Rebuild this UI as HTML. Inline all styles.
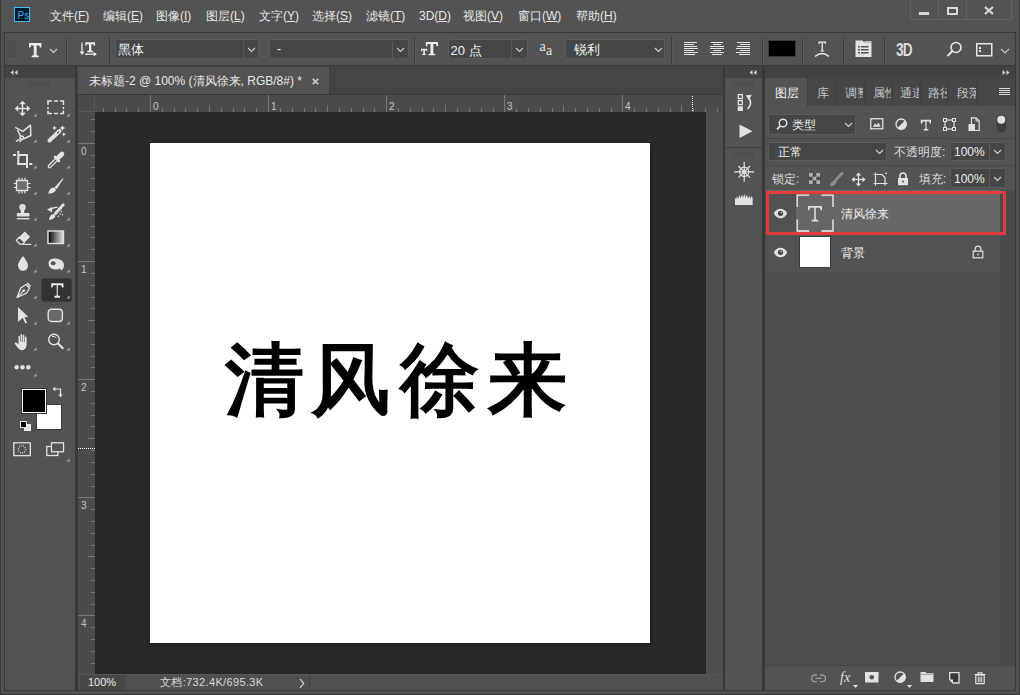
<!DOCTYPE html>
<html><head><meta charset="utf-8">
<style>
*{margin:0;padding:0;box-sizing:border-box}
html,body{width:1020px;height:695px;overflow:hidden;background:#4b4b4b;font-family:"Liberation Sans",sans-serif;color:#e0e0e0;font-size:12px}
.a{position:absolute}
.t{position:absolute;white-space:nowrap;line-height:1}
.mi{position:absolute;top:10px;font-size:12px;line-height:1;color:#e6e6e6;white-space:nowrap}
.mi u{text-decoration:underline;text-underline-offset:1px}
.dd{position:absolute;background:#464646;border:1px solid #5b5b5b;border-radius:1px}
.sep{position:absolute;width:2px;border-left:1px solid #3e3e3e;border-right:1px solid #5a5a5a}
svg{position:absolute;overflow:visible}
</style></head><body>

<!-- window frame -->
<div class="a" style="left:0;top:0;width:1020px;height:695px;background:#505050;border:1px solid #3a3a3a"></div>

<!-- MENU BAR -->
<div class="a" style="left:0;top:0;width:1020px;height:32px;background:#535353">
  <div class="a" style="left:0;top:0;width:1px;height:32px;background:#3a3a3a"></div><div class="a" style="left:1019px;top:0;width:1px;height:32px;background:#3a3a3a"></div>
  <div class="a" style="left:14px;top:7px;width:16px;height:15px;background:#021a2e;border:1px solid #3cc0ee"></div>
  <div class="t" style="left:17.5px;top:10.5px;font-size:10px;color:#3aaeea">Ps</div>
  <div class="mi" style="left:50px">文件(<u>F</u>)</div>
  <div class="mi" style="left:103px">编辑(<u>E</u>)</div>
  <div class="mi" style="left:156px">图像(<u>I</u>)</div>
  <div class="mi" style="left:206px">图层(<u>L</u>)</div>
  <div class="mi" style="left:259px">文字(<u>Y</u>)</div>
  <div class="mi" style="left:312px">选择(<u>S</u>)</div>
  <div class="mi" style="left:366px">滤镜(<u>T</u>)</div>
  <div class="mi" style="left:419px">3D(<u>D</u>)</div>
  <div class="mi" style="left:463px">视图(<u>V</u>)</div>
  <div class="mi" style="left:518px">窗口(<u>W</u>)</div>
  <div class="mi" style="left:576px">帮助(<u>H</u>)</div>
  <!-- window buttons -->
  <div class="a" style="left:910px;top:-1px;width:102px;height:21px;border:1px solid #626262;border-top:none"></div>
  <div class="a" style="left:938px;top:0;width:1px;height:20px;background:#626262"></div>
  <div class="a" style="left:966px;top:0;width:1px;height:20px;background:#626262"></div>
  <div class="a" style="left:919px;top:12px;width:10px;height:3px;background:#d8d8d8"></div>
  <div class="a" style="left:947px;top:7px;width:11px;height:8px;border:2px solid #d8d8d8"></div>
  <svg style="left:984px;top:6px" width="10" height="9"><path d="M1 1L9 8M9 1L1 8" stroke="#d8d8d8" stroke-width="2.2"/></svg>
</div>

<!-- OPTIONS BAR -->
<div class="a" style="left:4px;top:32px;width:1012px;height:34px;background:#535353;border:1px solid #393939"></div>
<svg style="left:8px;top:40px" width="9" height="19"><g fill="#4b4b4b"><rect x="0" y="0" width="9" height="1"/><rect x="0" y="2" width="9" height="1"/><rect x="0" y="4" width="9" height="1"/><rect x="0" y="6" width="9" height="1"/><rect x="0" y="8" width="9" height="1"/><rect x="0" y="10" width="9" height="1"/><rect x="0" y="12" width="9" height="1"/><rect x="0" y="14" width="9" height="1"/><rect x="0" y="16" width="9" height="1"/></g></svg>
<!-- T tool icon -->
<svg style="left:28px;top:42px" width="15" height="16"><path d="M1 1H13.4V5.6H12L11.3 3.6H8.6V13.2L10.8 13.8V15.3H3.6V13.8L5.8 13.2V3.6H3.1L2.4 5.6H1Z" fill="#ececec"/></svg>
<svg style="left:49px;top:48px" width="9" height="6"><path d="M1 1l3.5 3.5L8 1" stroke="#cfcfcf" stroke-width="1.1" fill="none"/></svg>
<div class="sep" style="left:66px;top:37px;height:27px"></div>
<!-- orientation icon -->
<svg style="left:79px;top:41px" width="20" height="17"><path d="M3 1.5v11" stroke="#e8e8e8" stroke-width="1.3"/><path d="M0.5 10.5L3 14l2.5-3.5z" fill="#e8e8e8"/><path d="M6.2 1.2H16.1V4.8H15L14.5 3.3H12.3V9.6L14 10V11.2H8.3V10L10 9.6V3.3H7.8L7.3 4.8H6.2Z" fill="#ececec"/><path d="M6 13.2h9" stroke="#e8e8e8" stroke-width="1.3"/><path d="M14.5 10.8L18 13.2l-3.5 2.4z" fill="#e8e8e8"/></svg>
<div class="sep" style="left:109px;top:37px;height:27px"></div>
<!-- font family dropdown -->
<div class="dd" style="left:115px;top:39px;width:144px;height:20px"></div>
<div class="a" style="left:243px;top:41px;width:1px;height:17px;background:#5a5a5a"></div>
<div class="t" style="left:117.5px;top:43px;font-size:13px;color:#f2f2f2">黑体</div>
<svg style="left:247px;top:47px" width="9" height="6"><path d="M1 1l3.5 3.5L8 1" stroke="#cfcfcf" stroke-width="1.1" fill="none"/></svg>
<!-- font style dropdown -->
<div class="dd" style="left:269px;top:39px;width:140px;height:20px"></div>
<div class="a" style="left:392px;top:41px;width:1px;height:17px;background:#5a5a5a"></div>
<div class="t" style="left:277px;top:43px;font-size:12px;color:#ececec">-</div>
<svg style="left:396px;top:47px" width="9" height="6"><path d="M1 1l3.5 3.5L8 1" stroke="#cfcfcf" stroke-width="1.1" fill="none"/></svg>
<div class="sep" style="left:414px;top:37px;height:27px"></div>
<!-- size icon -->
<svg style="left:420px;top:41px" width="20" height="16"><path d="M1 7.8H7.2V10.2H6.4L6 9.2H4.9V12.8L5.9 13.1V14H2.3V13.1L3.3 12.8V9.2H2.2L1.8 10.2H1Z" fill="#ececec"/><path d="M5.8 1H18V5.2H16.8L16.1 3H13.3V12.6L15.3 13.2V14.2H8.5V13.2L10.5 12.6V3H7.7L7 5.2H5.8Z" fill="#ececec"/></svg>
<!-- size dropdown -->
<div class="dd" style="left:448px;top:39px;width:80px;height:20px"></div>
<div class="a" style="left:511px;top:41px;width:1px;height:17px;background:#5a5a5a"></div>
<div class="t" style="left:450.5px;top:43.5px;font-size:13px;color:#f2f2f2">20 点</div>
<svg style="left:515px;top:47px" width="9" height="6"><path d="M1 1l3.5 3.5L8 1" stroke="#cfcfcf" stroke-width="1.1" fill="none"/></svg>
<!-- aa icon -->
<div class="t" style="left:539.5px;top:40px;font-size:14px;color:#e6e6e6;font-family:'Liberation Serif',serif">a</div>
<div class="t" style="left:546px;top:43.5px;font-size:14px;color:#e6e6e6;font-family:'Liberation Serif',serif">a</div>
<!-- antialias dropdown -->
<div class="dd" style="left:565px;top:39px;width:100px;height:20px"></div>
<div class="t" style="left:574px;top:43px;font-size:13px;color:#f2f2f2">锐利</div>
<svg style="left:654px;top:47px" width="9" height="6"><path d="M1 1l3.5 3.5L8 1" stroke="#cfcfcf" stroke-width="1.1" fill="none"/></svg>
<div class="sep" style="left:671px;top:37px;height:27px"></div>
<!-- align icons -->
<svg style="left:684px;top:42px" width="15" height="14"><g fill="#e4e4e4"><rect x="0" y="0" width="13" height="1"/><rect x="0" y="2" width="10" height="1"/><rect x="0" y="4" width="13" height="1"/><rect x="0" y="6" width="14" height="1"/><rect x="0" y="8" width="10" height="1"/><rect x="0" y="10" width="14" height="1"/><rect x="0" y="12" width="11" height="1"/></g></svg>
<svg style="left:710px;top:42px" width="15" height="14"><g fill="#e4e4e4"><rect x="1" y="0" width="12" height="1"/><rect x="3" y="2" width="8" height="1"/><rect x="0" y="4" width="14" height="1"/><rect x="0" y="6" width="14" height="1"/><rect x="3" y="8" width="8" height="1"/><rect x="0" y="10" width="14" height="1"/><rect x="2" y="12" width="10" height="1"/></g></svg>
<svg style="left:736px;top:42px" width="15" height="14"><g fill="#e4e4e4"><rect x="1" y="0" width="13" height="1"/><rect x="4" y="2" width="10" height="1"/><rect x="1" y="4" width="13" height="1"/><rect x="0" y="6" width="14" height="1"/><rect x="4" y="8" width="10" height="1"/><rect x="0" y="10" width="14" height="1"/><rect x="3" y="12" width="11" height="1"/></g></svg>
<div class="sep" style="left:762px;top:37px;height:27px"></div>
<div class="a" style="left:768px;top:40px;width:28px;height:17px;background:#000;border:1px solid #3a3a3a"></div>
<div class="sep" style="left:802px;top:37px;height:27px"></div>
<!-- warp -->
<svg style="left:814px;top:40px" width="17" height="18"><path d="M4.5 1.5h7.5v2.5h-1l-.4-1.2H8.9v7.4l1.2.4v1H6.4v-1l1.2-.4V2.8H6l-.4 1.2h-1.1z" fill="#e8e8e8"/><path d="M1 16.5Q8 10.5 15 16.5" stroke="#e8e8e8" stroke-width="1.4" fill="none"/></svg>
<div class="sep" style="left:843px;top:37px;height:27px"></div>
<!-- char panel icon -->
<svg style="left:855px;top:40px" width="17" height="18"><path d="M0.5 0.5h7l1.5 1.8h7.5v14.7h-16z" fill="#e4e4e4"/><path d="M9.5 1h7v1.2h-7z" fill="#bdbdbd"/><g fill="#535353"><rect x="3" y="6" width="2" height="1.5"/><rect x="6" y="6" width="7.5" height="1.5"/><rect x="3" y="9" width="2" height="1.5"/><rect x="6" y="9" width="7.5" height="1.5"/><rect x="3" y="12" width="2" height="1.5"/><rect x="6" y="12" width="7.5" height="1.5"/></g></svg>
<div class="sep" style="left:884px;top:37px;height:27px"></div>
<div class="t" style="left:896px;top:41.5px;font-size:17.5px;font-weight:bold;color:#dcdcdc;letter-spacing:-1px;transform:scaleX(0.78);transform-origin:0 0">3D</div>
<!-- search -->
<svg style="left:946px;top:41px" width="17" height="17"><circle cx="10" cy="6.5" r="5" stroke="#e6e6e6" stroke-width="1.6" fill="none"/><path d="M6.5 10L1.5 15" stroke="#e6e6e6" stroke-width="2"/></svg>
<!-- workspace -->
<svg style="left:976px;top:43px" width="17" height="14"><rect x="0.75" y="0.75" width="15" height="12" stroke="#e6e6e6" stroke-width="1.5" fill="none"/><rect x="3" y="4" width="2" height="2" fill="#e6e6e6"/><rect x="3" y="7" width="2" height="2" fill="#e6e6e6"/></svg>
<svg style="left:1000px;top:48px" width="10" height="6"><path d="M1 1l4 4L9 1" stroke="#c8c8c8" stroke-width="1.1" fill="none"/></svg>

<!-- TOOLS PANEL -->
<div class="a" style="left:4px;top:66px;width:73px;height:625px;background:#393939"></div>
<div class="a" style="left:5px;top:66px;width:70px;height:12px;background:#434343"></div>
<svg style="left:10px;top:70px" width="8" height="5"><path d="M3.5 0L0.5 2.5 3.5 5zM7.5 0L4.5 2.5 7.5 5z" fill="#d0d0d0"/></svg>
<div class="a" style="left:5px;top:78px;width:70px;height:612px;background:#535353"></div>
<svg style="left:28px;top:82px" width="22" height="5"><g fill="#4a4a4a"><rect x="0" y="0" width="1" height="5"/><rect x="2" y="0" width="1" height="5"/><rect x="4" y="0" width="1" height="5"/><rect x="6" y="0" width="1" height="5"/><rect x="8" y="0" width="1" height="5"/><rect x="10" y="0" width="1" height="5"/><rect x="12" y="0" width="1" height="5"/><rect x="14" y="0" width="1" height="5"/><rect x="16" y="0" width="1" height="5"/><rect x="18" y="0" width="1" height="5"/><rect x="20" y="0" width="1" height="5"/></g></svg>
<!-- move -->
<svg style="left:14px;top:100px" width="18" height="18"><g fill="#e2e2e2"><rect x="7.8" y="3" width="1.4" height="11"/><rect x="3" y="7.8" width="11" height="1.4"/><path d="M8.5 0.7L11.8 4.2H5.2z"/><path d="M8.5 16.3L11.8 12.8H5.2z"/><path d="M0.7 8.5L4.2 5.2V11.8z"/><path d="M16.3 8.5L12.8 5.2V11.8z"/></g></svg>
<svg style="left:33px;top:113px" width="4" height="4"><path d="M3.6 0.4V3.6H0.4z" fill="#a8a8a8"/></svg>
<!-- marquee -->
<svg style="left:47px;top:100px" width="18" height="15"><path d="M1 5V1H5M7 1H11M13 1H16.4V5M16.4 7V9M16.4 10.5V13.5H13M11 13.5H7M5 13.5H1V10.5M1 9V7" stroke="#e2e2e2" stroke-width="1.5" fill="none"/></svg>
<svg style="left:66px;top:113px" width="4" height="4"><path d="M3.6 0.4V3.6H0.4z" fill="#a8a8a8"/></svg>
<!-- lasso -->
<svg style="left:14px;top:124px" width="18" height="19"><path d="M1.2 3.3L8.8 7.3 16.5 1.2 16.8 11.5 9.2 15M7 13L3.5 6.2" stroke="#e2e2e2" stroke-width="1.5" fill="none" stroke-linejoin="round"/><circle cx="7.8" cy="13.6" r="1.7" stroke="#e2e2e2" stroke-width="1.5" fill="none"/><path d="M6.4 14.8L1.8 17.4M8.6 15.2L5.3 18" stroke="#e2e2e2" stroke-width="1.4" fill="none"/></svg>
<svg style="left:33px;top:139px" width="4" height="4"><path d="M3.6 0.4V3.6H0.4z" fill="#a8a8a8"/></svg>
<!-- magic wand -->
<svg style="left:47px;top:124px" width="20" height="19"><path d="M2.5 16.5L12.5 7" stroke="#e2e2e2" stroke-width="4" stroke-linecap="round"/><path d="M10.3 9.2L12 7.6" stroke="#535353" stroke-width="1.2"/><path d="M7.5 1.5l.8 1.7 1.7.8-1.7.8-.8 1.7-.8-1.7-1.7-.8 1.7-.8z" fill="#e2e2e2"/><path d="M15.5 1.2l.9 1.9 1.9.9-1.9.9-.9 1.9-.9-1.9-1.9-.9 1.9-.9z" fill="#e2e2e2"/><path d="M16.8 8.2l.7 1.4 1.4.7-1.4.7-.7 1.4-.7-1.4-1.4-.7 1.4-.7z" fill="#e2e2e2"/></svg>
<svg style="left:66px;top:139px" width="4" height="4"><path d="M3.6 0.4V3.6H0.4z" fill="#a8a8a8"/></svg>
<!-- crop -->
<svg style="left:12px;top:150px" width="21" height="19"><g fill="#e2e2e2"><rect x="5.3" y="1" width="2" height="14"/><rect x="7" y="4" width="9" height="2"/><rect x="14" y="4" width="2" height="14"/><rect x="5.3" y="13" width="9" height="2"/><rect x="1" y="4" width="3" height="2"/><rect x="17.3" y="13" width="3" height="2"/></g></svg>
<svg style="left:33px;top:165px" width="4" height="4"><path d="M3.6 0.4V3.6H0.4z" fill="#a8a8a8"/></svg>
<!-- eyedropper -->
<svg style="left:47px;top:151px" width="19" height="18"><path d="M2.6 15.4L9.5 8.5" stroke="#e2e2e2" stroke-width="4" stroke-linecap="round"/><path d="M2.6 15.4L9.5 8.5" stroke="#535353" stroke-width="1.4" stroke-linecap="round"/><path d="M8 6L12 10" stroke="#e2e2e2" stroke-width="2.6" stroke-linecap="round"/><path d="M10.8 7.2L15 3" stroke="#e2e2e2" stroke-width="4.6" stroke-linecap="round"/></svg>
<svg style="left:66px;top:165px" width="4" height="4"><path d="M3.6 0.4V3.6H0.4z" fill="#a8a8a8"/></svg>
<!-- frame chip -->
<svg style="left:13px;top:177px" width="19" height="18"><rect x="3.5" y="3.5" width="11" height="10" fill="#6e6e6e" stroke="#e2e2e2" stroke-width="1.4"/><g stroke="#e2e2e2" stroke-width="1.2"><path d="M6 0.8V3M9 0.8V3M12 0.8V3M6 14V16.5M9 14V16.5M12 14V16.5M0.8 6.5H3M0.8 10.5H3M15 6.5H17.5M15 10.5H17.5"/></g></svg>
<svg style="left:33px;top:191px" width="4" height="4"><path d="M3.6 0.4V3.6H0.4z" fill="#a8a8a8"/></svg>
<!-- brush -->
<svg style="left:47px;top:177px" width="18" height="18"><path d="M7.5 10.5L15.8 1.2 16.5 1.8 9.8 12z" fill="#e2e2e2"/><path d="M1.2 16.8C1.8 13.5 3.5 11 6 10.5 8 10.2 9.5 11.8 8.5 13.8 7 16 4 16.8 1.2 16.8z" fill="#e2e2e2"/></svg>
<svg style="left:66px;top:191px" width="4" height="4"><path d="M3.6 0.4V3.6H0.4z" fill="#a8a8a8"/></svg>
<!-- stamp -->
<svg style="left:16px;top:203px" width="16" height="18"><circle cx="6.5" cy="4.3" r="3.2" fill="#e2e2e2"/><rect x="4.8" y="6" width="3.4" height="4" fill="#e2e2e2"/><rect x="0.8" y="10" width="12.6" height="3.6" rx="0.8" fill="#e2e2e2"/><rect x="0.8" y="15" width="12.6" height="1.4" fill="#e2e2e2"/><circle cx="6.5" cy="4" r="1.1" fill="#cfcfcf"/></svg>
<svg style="left:33px;top:217px" width="4" height="4"><path d="M3.6 0.4V3.6H0.4z" fill="#a8a8a8"/></svg>
<!-- history brush -->
<svg style="left:46px;top:203px" width="20" height="18"><path d="M9.5 10.5L17.2 1.8" stroke="#e2e2e2" stroke-width="2.8" stroke-linecap="round"/><path d="M3 16.8C3.3 13.5 5 11.5 7.3 11 9.2 10.8 10 12.5 8.8 14.2 7.3 16.2 5.3 16.8 3 16.8z" fill="#e2e2e2"/><path d="M5 6.2Q8 4 11.5 4.5" stroke="#e2e2e2" stroke-width="1.3" fill="none"/><path d="M1 6.5L6 4V9.5z" fill="#e2e2e2"/><g fill="#e2e2e2"><circle cx="15.3" cy="8.5" r=".8"/><circle cx="14.2" cy="11" r=".8"/><circle cx="12.3" cy="13.2" r=".8"/><circle cx="16.5" cy="11.8" r=".7"/></g></svg>
<svg style="left:66px;top:217px" width="4" height="4"><path d="M3.6 0.4V3.6H0.4z" fill="#a8a8a8"/></svg>
<!-- eraser -->
<svg style="left:15px;top:230px" width="18" height="17"><path d="M9.8 1.5L15.2 6.7 8 13.9 2.6 8.7z" fill="#e2e2e2"/><path d="M4.2 7.2L9.5 12.4 7.8 14.2H4.8L1.3 10.5z" fill="#535353" stroke="#e2e2e2" stroke-width="1.2" stroke-linejoin="round"/><path d="M7.8 14.4H16.5" stroke="#e2e2e2" stroke-width="1.2"/></svg>
<svg style="left:33px;top:243px" width="4" height="4"><path d="M3.6 0.4V3.6H0.4z" fill="#a8a8a8"/></svg>
<!-- gradient -->
<svg style="left:47px;top:230px" width="18" height="15"><defs><linearGradient id="gr" x1="0" x2="1"><stop offset="0" stop-color="#000"/><stop offset="1" stop-color="#e6e6e6"/></linearGradient></defs><rect x="1" y="1" width="15.5" height="12.5" fill="url(#gr)" stroke="#e2e2e2" stroke-width="1.4"/></svg>
<svg style="left:66px;top:243px" width="4" height="4"><path d="M3.6 0.4V3.6H0.4z" fill="#a8a8a8"/></svg>
<!-- blur drop -->
<svg style="left:17px;top:255px" width="13" height="17"><path d="M6 1C6 1 1 7 1 10.5 1 13.5 3.2 15.8 6 15.8 8.8 15.8 11 13.5 11 10.5 11 7 6 1 6 1z" fill="#e2e2e2"/></svg>
<svg style="left:33px;top:269px" width="4" height="4"><path d="M3.6 0.4V3.6H0.4z" fill="#a8a8a8"/></svg>
<!-- dodge/sponge -->
<svg style="left:47px;top:257px" width="19" height="15"><path d="M1.5 5.5C2 2.5 5 1 9 1.5 13 2 17 4 17 8 17 10.5 16 12.5 14.5 13.5L13 11.5C11.5 12.5 9.5 12.8 7 12.3 3.5 11.5 1.2 9 1.5 5.5z" fill="#e2e2e2"/><ellipse cx="6.2" cy="6.3" rx="2.4" ry="2" fill="#535353"/></svg>
<svg style="left:66px;top:269px" width="4" height="4"><path d="M3.6 0.4V3.6H0.4z" fill="#a8a8a8"/></svg>
<!-- pen -->
<svg style="left:15px;top:282px" width="18" height="17"><path d="M11 2.5L14.5 6 11.5 11.2 2 15.5 5.8 6z" fill="none" stroke="#e2e2e2" stroke-width="1.3" stroke-linejoin="round"/><path d="M11.5 1.5L12.8 0.5 16 3.7 15 5z" fill="#e2e2e2"/><path d="M2.5 15L8.3 9.2" stroke="#e2e2e2" stroke-width="1.1"/><circle cx="8.8" cy="8.6" r="1.3" fill="#e2e2e2"/></svg>
<svg style="left:33px;top:295px" width="4" height="4"><path d="M3.6 0.4V3.6H0.4z" fill="#a8a8a8"/></svg>
<!-- type tool active -->
<div class="a" style="left:41px;top:278px;width:31px;height:24px;background:#333333;border:1px solid #3e3e3e;border-radius:3px"></div>
<svg style="left:50px;top:282px" width="15" height="17"><path d="M1.2 1.2h12.3v4.3h-1.5l-.7-2.3h-3.5v10.3l2.3.6v1.6H4.4v-1.6l2.3-.6V3.2H3.2l-.7 2.3H1.2z" fill="#ececec"/></svg>
<svg style="left:66px;top:295px" width="4" height="4"><path d="M3.6 0.4V3.6H0.4z" fill="#a8a8a8"/></svg>
<!-- path select -->
<svg style="left:17px;top:306px" width="13" height="19"><path d="M1 1L11.5 11 7.5 11.3 10 16.8 8.3 17.5 5.8 12 1 15.8z" fill="#e2e2e2"/></svg>
<svg style="left:33px;top:321px" width="4" height="4"><path d="M3.6 0.4V3.6H0.4z" fill="#a8a8a8"/></svg>
<!-- rounded rect -->
<svg style="left:47px;top:308px" width="18" height="16"><rect x="1.2" y="1.2" width="14.2" height="12.3" rx="3.2" fill="#6a6a6a" stroke="#e2e2e2" stroke-width="1.4"/></svg>
<svg style="left:66px;top:321px" width="4" height="4"><path d="M3.6 0.4V3.6H0.4z" fill="#a8a8a8"/></svg>
<!-- hand -->
<svg style="left:14px;top:333px" width="18" height="19"><path d="M4.5 15.5C3 14 1.2 11.5 0.8 10.5 .5 9.5 1.8 9 2.6 9.8L4.5 11.5V3.5C4.5 2.5 6 2.5 6 3.5V9H6.6V1.8C6.6.8 8.2.8 8.2 1.8V9H8.8V2.5C8.8 1.5 10.4 1.5 10.4 2.5V9.2H11V4.2C11 3.2 12.6 3.2 12.6 4.2V12C12.6 15 10.5 17.2 8 17.2 6.5 17.2 5.5 16.5 4.5 15.5z" fill="#e2e2e2"/></svg>
<svg style="left:33px;top:347px" width="4" height="4"><path d="M3.6 0.4V3.6H0.4z" fill="#a8a8a8"/></svg>
<!-- zoom -->
<svg style="left:47px;top:333px" width="18" height="18"><circle cx="7" cy="6.5" r="5.3" stroke="#e2e2e2" stroke-width="1.4" fill="none"/><path d="M10.8 10.3L16.3 15.8" stroke="#e2e2e2" stroke-width="2.2"/><path d="M5 3.5Q7.5 2.8 9.2 4.8" stroke="#e2e2e2" stroke-width="1" fill="none"/></svg>
<svg style="left:66px;top:347px" width="4" height="4"><path d="M3.6 0.4V3.6H0.4z" fill="#a8a8a8"/></svg>
<!-- dots -->
<svg style="left:14px;top:364px" width="18" height="7"><g fill="#e2e2e2"><circle cx="2.7" cy="3.3" r="2.2"/><circle cx="8.5" cy="3.3" r="2.2"/><circle cx="14.3" cy="3.3" r="2.2"/></g></svg>
<svg style="left:33px;top:373px" width="4" height="4"><path d="M3.6 0.4V3.6H0.4z" fill="#a8a8a8"/></svg>
<!-- colors -->
<div class="a" style="left:36px;top:404px;width:26px;height:26px;background:#fff;border:1px solid #3a3a3a"></div>
<div class="a" style="left:21px;top:388px;width:26px;height:26px;background:#fff;border:1px solid #333"></div>
<div class="a" style="left:23px;top:390px;width:22px;height:22px;background:#000"></div>
<svg style="left:52px;top:386px" width="12" height="12"><path d="M2.5 3H8.5V9" stroke="#e2e2e2" stroke-width="1.2" fill="none"/><path d="M0.5 3L3.3 0.8V5.2z" fill="#e2e2e2"/><path d="M8.5 11.3L6.3 8.5H10.7z" fill="#e2e2e2"/></svg>
<div class="a" style="left:24px;top:424px;width:7px;height:7px;background:#e8e8e8"></div>
<div class="a" style="left:20px;top:421px;width:7px;height:7px;background:#000;border:1px solid #e8e8e8"></div>
<!-- quick mask -->
<svg style="left:13px;top:442px" width="19" height="15"><rect x="0.8" y="0.8" width="16.5" height="12.8" fill="none" stroke="#e2e2e2" stroke-width="1.3"/><circle cx="9" cy="7.2" r="3.6" fill="none" stroke="#e2e2e2" stroke-width="1.2" stroke-dasharray="1 1.2"/></svg>
<!-- screen mode -->
<svg style="left:46px;top:442px" width="19" height="15"><rect x="0.8" y="4.5" width="11" height="9" fill="none" stroke="#e2e2e2" stroke-width="1.3"/><rect x="5.5" y="0.8" width="12" height="9" fill="#535353" stroke="#e2e2e2" stroke-width="1.3"/></svg>
<svg style="left:66px;top:458px" width="4" height="4"><path d="M3.6 0.4V3.6H0.4z" fill="#a8a8a8"/></svg>

<!-- DOCUMENT AREA -->
<div class="a" style="left:76px;top:66px;width:649px;height:625px;background:#393939"></div>
<div class="a" style="left:77px;top:66px;width:646px;height:28px;background:#454545"></div>
<div class="a" style="left:78px;top:67px;width:251px;height:27px;background:#535353"></div>
<div class="a" style="left:330px;top:67px;width:1px;height:27px;background:#3d3d3d"></div>
<div class="a" style="left:334px;top:67px;width:1px;height:27px;background:#3d3d3d"></div>
<div class="t" style="left:89px;top:75px;font-size:12px;color:#e8e8e8">未标题-2 @ 100% (清风徐来, RGB/8#) *</div>
<svg style="left:312px;top:78px" width="7" height="7"><path d="M0.8 0.8L6.2 6.2M6.2 0.8L0.8 6.2" stroke="#c8c8c8" stroke-width="1.7"/></svg>
<!-- rulers -->
<div class="a" style="left:78px;top:94px;width:645px;height:1px;background:#3a3a3a"></div>
<div class="a" style="left:78px;top:95px;width:645px;height:17px;background:#4b4b4b"></div>
<div class="a" style="left:78px;top:95px;width:17px;height:579px;background:#4b4b4b"></div>
<div class="a" style="left:78px;top:111px;width:17px;height:1px;background:#5a5a5a"></div>
<div class="a" style="left:94px;top:95px;width:1px;height:17px;background:#5a5a5a"></div>
<svg style="left:95px;top:95px" width="628" height="17"><g fill="#767676"><rect x="8" y="13" width="1" height="4"/><rect x="20" y="13" width="1" height="4"/><rect x="31" y="13" width="1" height="4"/><rect x="43" y="13" width="1" height="4"/><rect x="55" y="0" width="1" height="17"/><rect x="67" y="13" width="1" height="4"/><rect x="79" y="13" width="1" height="4"/><rect x="90" y="13" width="1" height="4"/><rect x="102" y="13" width="1" height="4"/><rect x="114" y="10" width="1" height="7"/><rect x="126" y="13" width="1" height="4"/><rect x="138" y="13" width="1" height="4"/><rect x="149" y="13" width="1" height="4"/><rect x="161" y="13" width="1" height="4"/><rect x="173" y="0" width="1" height="17"/><rect x="185" y="13" width="1" height="4"/><rect x="197" y="13" width="1" height="4"/><rect x="209" y="13" width="1" height="4"/><rect x="220" y="13" width="1" height="4"/><rect x="232" y="10" width="1" height="7"/><rect x="244" y="13" width="1" height="4"/><rect x="256" y="13" width="1" height="4"/><rect x="268" y="13" width="1" height="4"/><rect x="279" y="13" width="1" height="4"/><rect x="291" y="0" width="1" height="17"/><rect x="303" y="13" width="1" height="4"/><rect x="315" y="13" width="1" height="4"/><rect x="327" y="13" width="1" height="4"/><rect x="338" y="13" width="1" height="4"/><rect x="350" y="10" width="1" height="7"/><rect x="362" y="13" width="1" height="4"/><rect x="374" y="13" width="1" height="4"/><rect x="386" y="13" width="1" height="4"/><rect x="398" y="13" width="1" height="4"/><rect x="409" y="0" width="1" height="17"/><rect x="421" y="13" width="1" height="4"/><rect x="433" y="13" width="1" height="4"/><rect x="445" y="13" width="1" height="4"/><rect x="457" y="13" width="1" height="4"/><rect x="468" y="10" width="1" height="7"/><rect x="480" y="13" width="1" height="4"/><rect x="492" y="13" width="1" height="4"/><rect x="504" y="13" width="1" height="4"/><rect x="516" y="13" width="1" height="4"/><rect x="527" y="0" width="1" height="17"/><rect x="539" y="13" width="1" height="4"/><rect x="551" y="13" width="1" height="4"/><rect x="563" y="13" width="1" height="4"/><rect x="575" y="13" width="1" height="4"/><rect x="586" y="10" width="1" height="7"/><rect x="598" y="13" width="1" height="4"/><rect x="610" y="13" width="1" height="4"/><rect x="622" y="13" width="1" height="4"/></g></svg>
<svg style="left:78px;top:112px" width="17" height="561"><g fill="#767676"><rect x="13" y="7" width="4" height="1"/><rect x="13" y="19" width="4" height="1"/><rect x="0" y="31" width="17" height="1"/><rect x="13" y="43" width="4" height="1"/><rect x="13" y="55" width="4" height="1"/><rect x="13" y="66" width="4" height="1"/><rect x="13" y="78" width="4" height="1"/><rect x="10" y="90" width="7" height="1"/><rect x="13" y="102" width="4" height="1"/><rect x="13" y="114" width="4" height="1"/><rect x="13" y="125" width="4" height="1"/><rect x="13" y="137" width="4" height="1"/><rect x="0" y="149" width="17" height="1"/><rect x="13" y="161" width="4" height="1"/><rect x="13" y="173" width="4" height="1"/><rect x="13" y="185" width="4" height="1"/><rect x="13" y="196" width="4" height="1"/><rect x="10" y="208" width="7" height="1"/><rect x="13" y="220" width="4" height="1"/><rect x="13" y="232" width="4" height="1"/><rect x="13" y="244" width="4" height="1"/><rect x="13" y="255" width="4" height="1"/><rect x="0" y="267" width="17" height="1"/><rect x="13" y="279" width="4" height="1"/><rect x="13" y="291" width="4" height="1"/><rect x="13" y="303" width="4" height="1"/><rect x="13" y="314" width="4" height="1"/><rect x="10" y="326" width="7" height="1"/><rect x="13" y="338" width="4" height="1"/><rect x="13" y="350" width="4" height="1"/><rect x="13" y="362" width="4" height="1"/><rect x="13" y="374" width="4" height="1"/><rect x="0" y="385" width="17" height="1"/><rect x="13" y="397" width="4" height="1"/><rect x="13" y="409" width="4" height="1"/><rect x="13" y="421" width="4" height="1"/><rect x="13" y="433" width="4" height="1"/><rect x="10" y="444" width="7" height="1"/><rect x="13" y="456" width="4" height="1"/><rect x="13" y="468" width="4" height="1"/><rect x="13" y="480" width="4" height="1"/><rect x="13" y="492" width="4" height="1"/><rect x="0" y="503" width="17" height="1"/><rect x="13" y="515" width="4" height="1"/><rect x="13" y="527" width="4" height="1"/><rect x="13" y="539" width="4" height="1"/><rect x="13" y="551" width="4" height="1"/></g></svg>
<div class="t" style="left:153px;top:101.5px;font-size:10px;color:#c4c4c4">0</div><div class="t" style="left:271px;top:101.5px;font-size:10px;color:#c4c4c4">1</div><div class="t" style="left:389px;top:101.5px;font-size:10px;color:#c4c4c4">2</div><div class="t" style="left:507px;top:101.5px;font-size:10px;color:#c4c4c4">3</div><div class="t" style="left:625px;top:101.5px;font-size:10px;color:#c4c4c4">4</div><div class="t" style="left:81px;top:147px;font-size:10px;color:#c4c4c4">0</div><div class="t" style="left:81px;top:265px;font-size:10px;color:#c4c4c4">1</div><div class="t" style="left:81px;top:383px;font-size:10px;color:#c4c4c4">2</div><div class="t" style="left:81px;top:501px;font-size:10px;color:#c4c4c4">3</div><div class="t" style="left:81px;top:619px;font-size:10px;color:#c4c4c4">4</div>
<svg style="left:692px;top:96px" width="1" height="16"><path d="M0.5 0V16" stroke="#fff" stroke-width="1" stroke-dasharray="1 1"/></svg>
<svg style="left:78px;top:448px" width="17" height="1"><path d="M0 0.5H17" stroke="#fff" stroke-width="1" stroke-dasharray="1 1"/></svg>
<!-- pasteboard -->
<div class="a" style="left:95px;top:112px;width:611px;height:562px;background:#282828"></div>
<div class="a" style="left:150px;top:143px;width:500px;height:500px;background:#fff;box-shadow:1px 1px 3px rgba(0,0,0,0.35)"></div>
<div class="t" style="left:224.5px;top:340.5px;font-size:78.5px;font-weight:bold;color:#000">清</div>
<div class="t" style="left:311.2px;top:340.5px;font-size:78.5px;font-weight:bold;color:#000">风</div>
<div class="t" style="left:399.6px;top:340.5px;font-size:78.5px;font-weight:bold;color:#000">徐</div>
<div class="t" style="left:487.8px;top:340.5px;font-size:78.5px;font-weight:bold;color:#000">来</div>
<!-- vertical scrollbar -->
<div class="a" style="left:706px;top:112px;width:17px;height:578px;background:#4e4e4e"></div>
<!-- status bar -->
<div class="a" style="left:78px;top:674px;width:645px;height:16px;background:#505050"></div><div class="a" style="left:78px;top:674px;width:645px;height:1px;background:#575757"></div>
<div class="a" style="left:80px;top:675px;width:46px;height:15px;background:#484848"></div>
<div class="t" style="left:88px;top:677px;font-size:11px;color:#e8e8e8">100%</div>
<div class="t" style="left:160px;top:677px;font-size:11px;letter-spacing:0.35px;color:#d8d8d8">文档:732.4K/695.3K</div>
<svg style="left:299px;top:678px" width="6" height="11"><path d="M1 0.8L4.8 5.3 1 9.8" stroke="#d4d4d4" stroke-width="1.1" fill="none"/></svg>
<div class="a" style="left:309px;top:675px;width:1px;height:15px;background:#444444"></div>

<!-- MIDDLE PANEL -->
<div class="a" style="left:723px;top:66px;width:293px;height:625px;background:#393939"></div>
<div class="a" style="left:725px;top:66px;width:37px;height:12px;background:#434343"></div>
<svg style="left:749px;top:70px" width="8" height="5"><path d="M3.5 0L0.5 2.5 3.5 5zM7.5 0L4.5 2.5 7.5 5z" fill="#d0d0d0"/></svg>
<div class="a" style="left:725px;top:78px;width:37px;height:612px;background:#535353"></div>
<svg style="left:734px;top:82px" width="20" height="5"><g fill="#4a4a4a"><rect x="0" y="0" width="1" height="5"/><rect x="2" y="0" width="1" height="5"/><rect x="4" y="0" width="1" height="5"/><rect x="6" y="0" width="1" height="5"/><rect x="8" y="0" width="1" height="5"/><rect x="10" y="0" width="1" height="5"/><rect x="12" y="0" width="1" height="5"/><rect x="14" y="0" width="1" height="5"/><rect x="16" y="0" width="1" height="5"/><rect x="18" y="0" width="1" height="5"/></g></svg>
<!-- history icon -->
<svg style="left:737px;top:93px" width="17" height="19"><g fill="none" stroke="#e2e2e2" stroke-width="1.3"><rect x="1.3" y="1.6" width="4" height="4"/><rect x="1.3" y="7.6" width="4" height="4"/></g><rect x="0.7" y="13.3" width="5.3" height="4.7" fill="#e2e2e2"/><path d="M10.5 16C13.5 13 14.5 9 12 5" stroke="#e2e2e2" stroke-width="1.6" fill="none"/><path d="M8.8 2.2L14.8 1.8 11.8 7.2z" fill="#e2e2e2"/></svg>
<!-- play -->
<svg style="left:739px;top:124px" width="14" height="15"><path d="M0.5 0.5L13.5 7.2 0.5 14z" fill="#e2e2e2"/></svg>
<div class="a" style="left:725px;top:147px;width:37px;height:1px;background:#3e3e3e"></div>
<svg style="left:734px;top:152px" width="20" height="5"><g fill="#4a4a4a"><rect x="0" y="0" width="1" height="5"/><rect x="2" y="0" width="1" height="5"/><rect x="4" y="0" width="1" height="5"/><rect x="6" y="0" width="1" height="5"/><rect x="8" y="0" width="1" height="5"/><rect x="10" y="0" width="1" height="5"/><rect x="12" y="0" width="1" height="5"/><rect x="14" y="0" width="1" height="5"/><rect x="16" y="0" width="1" height="5"/><rect x="18" y="0" width="1" height="5"/></g></svg>
<!-- helm -->
<svg style="left:734px;top:161px" width="21" height="21"><g stroke="#e2e2e2" stroke-width="1.2" fill="none"><circle cx="10.2" cy="10.8" r="4.6"/><path d="M10.2 0.8V20.8M0.2 10.8H20.2M4.4 5L16 16.6M16 5L4.4 16.6"/></g></svg>
<!-- crown -->
<svg style="left:734px;top:193px" width="20" height="13"><path d="M1 12V4.5L2 6.5 3 3 4 6 5.5 2 6.5 5.5 8 1.5 9 5 10.3 0.8 11.5 5 12.8 1.5 14 5.5 15.3 2.2 16.3 6 17.5 3 18.7 5.5V12z" fill="#e2e2e2"/></svg>

<!-- LAYERS PANEL -->
<div class="a" style="left:765px;top:66px;width:250px;height:12px;background:#434343"></div>
<svg style="left:1002px;top:70px" width="8" height="5"><path d="M0.5 0L3.5 2.5 0.5 5zM4.5 0L7.5 2.5 4.5 5z" fill="#d0d0d0"/></svg>
<div class="a" style="left:765px;top:78px;width:250px;height:612px;background:#535353"></div>
<!-- tab row -->
<div class="a" style="left:807px;top:78px;width:208px;height:28px;background:#474747"></div>
<div class="a" style="left:807px;top:78px;width:1px;height:28px;background:#3f3f3f"></div>
<div class="a" style="left:835px;top:80px;width:1px;height:26px;background:#404040"></div>
<div class="a" style="left:864px;top:80px;width:1px;height:26px;background:#404040"></div>
<div class="a" style="left:892px;top:80px;width:1px;height:26px;background:#404040"></div>
<div class="a" style="left:920px;top:80px;width:1px;height:26px;background:#404040"></div>
<div class="a" style="left:947px;top:80px;width:1px;height:26px;background:#404040"></div>
<div class="a" style="left:976px;top:80px;width:1px;height:26px;background:#404040"></div>
<div class="t" style="left:775px;top:87px;font-size:12px;color:#f2f2f2">图层</div>
<div class="t" style="left:817px;top:87px;font-size:12px;color:#c4c4c4">库</div>
<div class="a" style="left:845px;top:84px;width:18px;height:18px;overflow:hidden"><div class="t" style="left:0;top:3px;font-size:12px;color:#c4c4c4">调整</div></div>
<div class="a" style="left:873px;top:84px;width:18px;height:18px;overflow:hidden"><div class="t" style="left:0;top:3px;font-size:12px;color:#c4c4c4">属性</div></div>
<div class="a" style="left:900px;top:84px;width:19px;height:18px;overflow:hidden"><div class="t" style="left:0;top:3px;font-size:12px;color:#c4c4c4">通道</div></div>
<div class="a" style="left:928px;top:84px;width:19px;height:18px;overflow:hidden"><div class="t" style="left:0;top:3px;font-size:12px;color:#c4c4c4">路径</div></div>
<div class="a" style="left:957px;top:84px;width:19px;height:18px;overflow:hidden"><div class="t" style="left:0;top:3px;font-size:12px;color:#c4c4c4">段落</div></div>
<svg style="left:999px;top:88px" width="11" height="8"><g fill="#d8d8d8"><rect y="0" width="11" height="1"/><rect y="2" width="11" height="1"/><rect y="4" width="11" height="1"/><rect y="6" width="11" height="1"/></g></svg>
<!-- filter row -->
<div class="dd" style="left:768px;top:114px;width:88px;height:21px"></div>
<svg style="left:776px;top:118px" width="12" height="13"><circle cx="7" cy="5" r="3.8" stroke="#e2e2e2" stroke-width="1.4" fill="none"/><path d="M4.3 7.8L1 11.3" stroke="#e2e2e2" stroke-width="1.8"/></svg>
<div class="t" style="left:792px;top:119px;font-size:12px;color:#ececec">类型</div>
<svg style="left:844px;top:122px" width="9" height="6"><path d="M1 1l3.5 3.5L8 1" stroke="#cfcfcf" stroke-width="1.1" fill="none"/></svg>
<svg style="left:870px;top:118px" width="14" height="12"><rect x="0.75" y="0.75" width="12" height="10" stroke="#e2e2e2" stroke-width="1.3" fill="none"/><path d="M2.8 8.8L5 5.3 6.6 7.3 8.4 4.6 10.8 8.8z" fill="#e2e2e2"/></svg>
<svg style="left:895px;top:118px" width="13" height="13"><circle cx="6.2" cy="6.2" r="5.2" stroke="#e2e2e2" stroke-width="1.3" fill="none"/><path d="M9.9 2.5A5.2 5.2 0 0 1 2.5 9.9z" fill="#e2e2e2"/></svg>
<svg style="left:920px;top:119px" width="12" height="12"><path d="M0.8 0.8h10.2v3.6h-1.2l-.6-2h-2.6v7.3l1.8.5v1.2H3.6V10.2l1.8-.5V2.4H2.8l-.6 2H.8z" fill="#e2e2e2"/></svg>
<svg style="left:943px;top:118px" width="13" height="13"><rect x="2" y="2" width="9" height="9" stroke="#e2e2e2" stroke-width="1.2" fill="none"/><g fill="#535353" stroke="#e2e2e2" stroke-width="1"><rect x="0.5" y="0.5" width="3" height="3"/><rect x="9.5" y="0.5" width="3" height="3"/><rect x="0.5" y="9.5" width="3" height="3"/><rect x="9.5" y="9.5" width="3" height="3"/></g></svg>
<svg style="left:968px;top:117px" width="12" height="15"><path d="M3.5 0.8H8L11.2 4V13.5H3.5z" fill="none" stroke="#e2e2e2" stroke-width="1.2"/><path d="M8 0.8V4H11.2" fill="none" stroke="#e2e2e2" stroke-width="1"/><rect x="0.5" y="7" width="6.5" height="7" fill="#e2e2e2"/></svg>
<svg style="left:996px;top:114px" width="11" height="20"><rect x="0.5" y="1" width="9.5" height="17.5" rx="4.75" fill="#3f3f3f"/><circle cx="5.25" cy="5.8" r="4" fill="#e4e4e4"/></svg>
<div class="a" style="left:765px;top:138px;width:250px;height:1px;background:#484848"></div>
<!-- blend row -->
<div class="dd" style="left:768px;top:142px;width:119px;height:19px"></div>
<div class="t" style="left:778px;top:146px;font-size:12px;color:#ececec">正常</div>
<svg style="left:875px;top:149px" width="9" height="6"><path d="M1 1l3.5 3.5L8 1" stroke="#cfcfcf" stroke-width="1.1" fill="none"/></svg>
<div class="t" style="left:894px;top:146px;font-size:12px;color:#dcdcdc">不透明度:</div>
<div class="dd" style="left:950px;top:142px;width:56px;height:19px"></div>
<div class="a" style="left:989px;top:143px;width:1px;height:17px;background:#5a5a5a"></div>
<div class="t" style="left:954px;top:146px;font-size:12px;color:#ececec">100%</div>
<svg style="left:993px;top:149px" width="9" height="6"><path d="M1 1l3.5 3.5L8 1" stroke="#cfcfcf" stroke-width="1.1" fill="none"/></svg>
<div class="a" style="left:765px;top:165px;width:250px;height:1px;background:#484848"></div>
<!-- lock row -->
<div class="t" style="left:772px;top:173px;font-size:12px;color:#dcdcdc">锁定:</div>
<svg style="left:809px;top:173px" width="12" height="12"><rect x="0" y="0" width="11" height="11" fill="#b0b0b0"/><g fill="#4c4c4c"><rect x="3.7" y="0" width="3.6" height="3.7"/><rect x="0" y="3.7" width="3.7" height="3.6"/><rect x="7.3" y="3.7" width="3.7" height="3.6"/><rect x="3.7" y="7.3" width="3.6" height="3.7"/></g></svg>
<svg style="left:829px;top:172px" width="15" height="15"><path d="M6.5 8.5L13.2 1.2" stroke="#8e8e8e" stroke-width="2.6" stroke-linecap="round"/><path d="M1 14C1.3 11.3 2.8 9.2 5 8.6 6.8 8.3 7.8 9.8 6.8 11.4 5.5 13.2 3.4 14 1 14z" fill="#8e8e8e"/></svg>
<svg style="left:851px;top:172px" width="15" height="15"><g fill="#e2e2e2"><rect x="6.8" y="2.5" width="1.3" height="10"/><rect x="2.5" y="6.8" width="10" height="1.3"/><path d="M7.45 0.5L10.2 3.5H4.7z"/><path d="M7.45 14.5L10.2 11.5H4.7z"/><path d="M0.5 7.45L3.5 4.7V10.2z"/><path d="M14.5 7.45L11.5 4.7V10.2z"/></g></svg>
<svg style="left:872px;top:172px" width="17" height="15"><g stroke="#e2e2e2" stroke-width="1.2" fill="none"><path d="M3.5 0.5V13.5M1.5 2.5H10L13 5.5V13.5M1.5 11.5H15.5"/></g><circle cx="14" cy="1.3" r="0.9" fill="#e2e2e2"/></svg>
<svg style="left:897px;top:172px" width="12" height="14"><path d="M3 6V4C3 2 4.2 1 6 1S9 2 9 4V6" stroke="#e2e2e2" stroke-width="1.6" fill="none"/><rect x="1" y="6" width="10" height="7.2" fill="#e2e2e2"/><rect x="5.2" y="8.5" width="1.6" height="2" fill="#535353"/></svg>
<div class="t" style="left:919px;top:173px;font-size:12px;color:#dcdcdc">填充:</div>
<div class="dd" style="left:950px;top:168px;width:56px;height:20px"></div>
<div class="a" style="left:989px;top:169px;width:1px;height:18px;background:#5a5a5a"></div>
<div class="t" style="left:954px;top:173px;font-size:12px;color:#ececec">100%</div>
<svg style="left:993px;top:176px" width="9" height="6"><path d="M1 1l3.5 3.5L8 1" stroke="#cfcfcf" stroke-width="1.1" fill="none"/></svg>
<!-- layer rows -->
<div class="a" style="left:765px;top:190px;width:235px;height:475px;background:#4e4e4e"></div>
<div class="a" style="left:766px;top:235px;width:234px;height:37px;background:#535353"></div>
<div class="a" style="left:766px;top:190px;width:234px;height:45px;background:#676767"></div>
<div class="a" style="left:769px;top:194px;width:27px;height:38px;background:#525252"></div>
<div class="a" style="left:795px;top:193px;width:1px;height:39px;background:#505050"></div>
<svg style="left:773px;top:208px" width="15" height="11"><path d="M0.8 5.5C2.5 2.3 4.8 0.8 7.5 0.8S12.5 2.3 14.2 5.5C12.5 8.7 10.2 10.2 7.5 10.2S2.5 8.7 0.8 5.5z" fill="#e2e2e2"/><circle cx="7.5" cy="5.3" r="2.6" fill="#444"/><circle cx="8.3" cy="4.5" r=".8" fill="#e2e2e2"/></svg>
<svg style="left:796px;top:194px" width="38" height="38"><g stroke="#f2f2f2" stroke-width="1.3" fill="none"><path d="M13 1.2H1.2V13M1.2 25.5V37H13M25.5 1.2H37V13M37 25.5V37H25.5"/></g><path d="M12 12h14v4.2h-1.3l-.7-2.5h-4.2v11.8l2.4.6v1.4h-6.4v-1.4l2.4-.6V13.7H14l-.7 2.5H12z" fill="#dedede"/></svg>
<div class="t" style="left:841px;top:208px;font-size:12px;color:#f0f0f0">清风徐来</div>
<!-- red annotation border -->

<div class="a" style="left:795px;top:236px;width:1px;height:35px;background:#4c4c4c"></div>
<svg style="left:773px;top:247px" width="15" height="11"><path d="M0.8 5.5C2.5 2.3 4.8 0.8 7.5 0.8S12.5 2.3 14.2 5.5C12.5 8.7 10.2 10.2 7.5 10.2S2.5 8.7 0.8 5.5z" fill="#e2e2e2"/><circle cx="7.5" cy="5.3" r="2.6" fill="#444"/><circle cx="8.3" cy="4.5" r=".8" fill="#e2e2e2"/></svg>
<div class="a" style="left:799px;top:236px;width:32px;height:32px;background:#fff;border:1px solid #3a3a3a"></div>
<div class="t" style="left:841px;top:247px;font-size:12px;color:#f0f0f0">背景</div>
<svg style="left:972px;top:245px" width="12" height="14"><path d="M3.2 6.2V4.2C3.2 2.3 4.3 1.2 6 1.2S8.8 2.3 8.8 4.2V6.2" stroke="#e2e2e2" stroke-width="1.2" fill="none"/><rect x="1.2" y="6.2" width="9.6" height="6.6" stroke="#e2e2e2" stroke-width="1.2" fill="none"/><rect x="5.3" y="8.8" width="1.4" height="1.5" fill="#e2e2e2"/></svg>
<!-- scrollbar strip -->
<div class="a" style="left:1000px;top:190px;width:15px;height:475px;background:#4b4b4b"></div>
<!-- bottom bar -->
<div class="a" style="left:765px;top:665px;width:250px;height:1px;background:#474747"></div>
<div class="a" style="left:765px;top:666px;width:250px;height:24px;background:#535353"></div>
<svg style="left:811px;top:674px" width="16" height="9"><g stroke="#9a9a9a" stroke-width="1.3" fill="none"><path d="M6 1H3.8A3.2 3.2 0 0 0 3.8 7.6H6M9 1H11.2A3.2 3.2 0 0 1 11.2 7.6H9M4.5 4.3H10.5"/></g></svg>
<div class="t" style="left:840px;top:671px;font-size:14px;font-style:italic;color:#dedede;font-family:'Liberation Serif',serif">fx</div>
<svg style="left:853px;top:685px" width="5" height="4"><path d="M0 0H5L2.5 3z" fill="#e0e0e0"/></svg>
<svg style="left:865px;top:672px" width="14" height="11"><rect x="0" y="0" width="13.5" height="10.5" fill="#e2e2e2"/><circle cx="6.75" cy="5.25" r="2.3" fill="#535353"/></svg>
<svg style="left:894px;top:671px" width="13" height="13"><circle cx="6.2" cy="6.2" r="5.2" stroke="#e2e2e2" stroke-width="1.3" fill="none"/><path d="M9.9 2.5A5.2 5.2 0 0 1 2.5 9.9z" fill="#e2e2e2"/></svg>
<svg style="left:907px;top:685px" width="5" height="4"><path d="M0 0H5L2.5 3z" fill="#e0e0e0"/></svg>
<svg style="left:920px;top:671px" width="14" height="12"><path d="M0.5 1H5.5L6.5 2.2H13.5V11H0.5z" fill="#e2e2e2"/><rect x="0.5" y="3" width="13" height="0.8" fill="#9a9a9a"/></svg>
<svg style="left:949px;top:672px" width="11" height="12"><path d="M0.7 0.7H10V11H4L0.7 7.6z" fill="#3a3a3a" stroke="#e2e2e2" stroke-width="1.3"/><path d="M0.7 7.6H4V11z" fill="#e2e2e2"/></svg>
<svg style="left:974px;top:672px" width="12" height="13"><path d="M0.5 2.5H11.5M4 2.5V0.8H8V2.5" stroke="#e2e2e2" stroke-width="1.2" fill="none"/><path d="M1.8 3.2H10.2V11.6H1.8z" stroke="#e2e2e2" stroke-width="1.2" fill="none"/><path d="M4.3 4.8V10.2M6 4.8V10.2M7.7 4.8V10.2" stroke="#e2e2e2" stroke-width="1"/></svg>

<div class="a" style="left:766px;top:191px;width:240px;height:44px;border:3px solid #e23b3b"></div>
</body></html>
